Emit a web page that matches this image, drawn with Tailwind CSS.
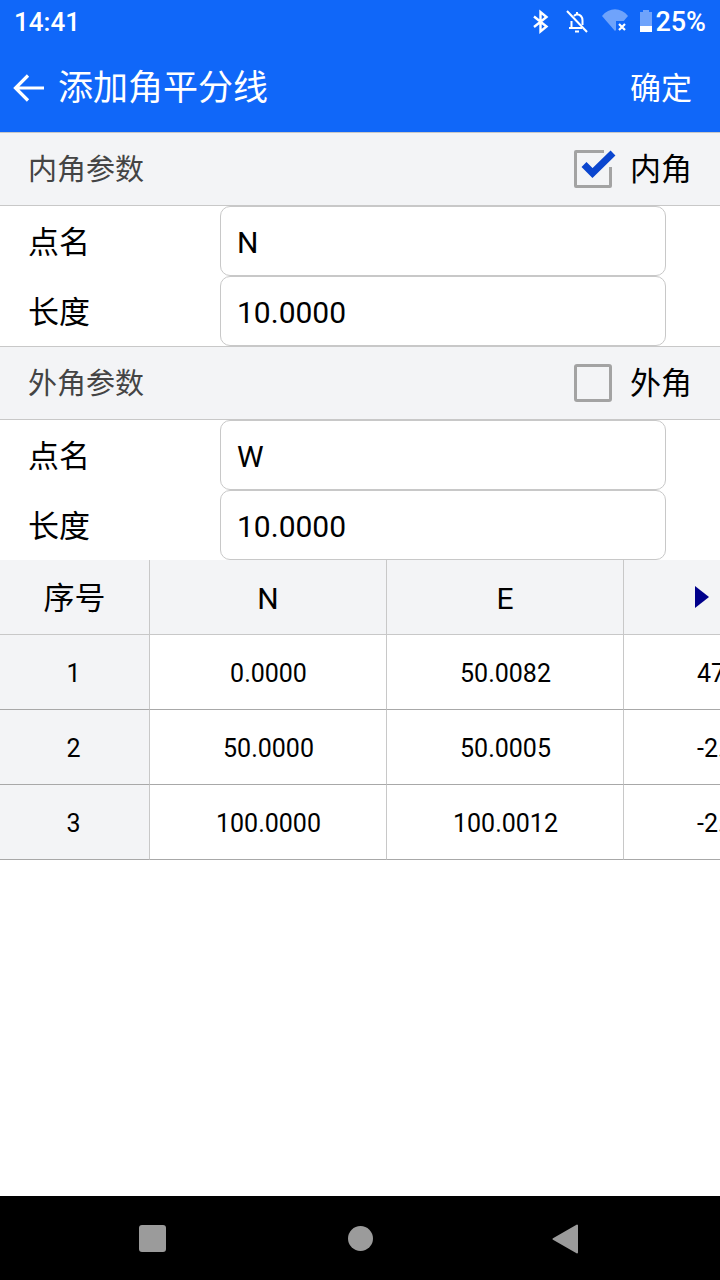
<!DOCTYPE html>
<html lang="zh">
<head>
    <meta charset="UTF-8">
    <meta name="viewport" content="width=device-width, initial-scale=1.0">
    <title>添加角平分线</title>
    <script src="https://cdn.jsdelivr.net/npm/@tailwindcss/browser@4"></script>
</head>
<body class="bg-white">
    <div class="w-[720px] h-[1280px] flex flex-col overflow-hidden font-['Roboto','Noto_Sans_CJK_SC',sans-serif] text-black">
        <!-- Status bar -->
        <div class="h-[44px] bg-[#1067f9] text-white flex items-center pl-[14px] pr-[14px]">
            <span class="text-[26px] font-medium leading-none">14:41</span>
            <div class="ml-auto flex items-center">
                <svg class="w-[20px] h-[26px]" viewBox="0 0 20 26" fill="none" stroke="white" stroke-width="2.4"><path d="M3 7.500L15.500 17.500 9.500 22.500V3L15.500 8 3 18"/></svg>
                <svg class="w-[24px] h-[26px] ml-[15px]" viewBox="0 0 24 26" fill="none" stroke="white" stroke-width="2"><path d="M5.500 18V12M8 7c1-1 2-1.500 3-1.800V3M11 5.200c3.500.5 5.500 3 5.500 6.300V16M3 19h13M9 22.500h4"/><path d="M1 2l20 21"/></svg>
                <svg class="w-[30px] h-[26px] ml-[12px]" viewBox="0 0 30 26"><path d="M0 7C7-2 19-2 26 7L13 22z" fill="white" fill-opacity="0.4"/><path d="M14 12h14v14H14z" fill="#1067f9"/><path d="M17 15l6 6M23 15l-6 6" stroke="white" stroke-width="2.200"/></svg>
                <svg class="w-[14px] h-[26px] ml-[7px]" viewBox="0 0 14 26"><path d="M4 1h6v2h3v20H1V3h3z" fill="white" fill-opacity="0.4"/><path d="M1 17h12v6H1z" fill="white"/></svg>
                <span class="text-[27px] font-medium leading-none ml-[2px]">25%</span>
            </div>
        </div>
        <!-- Toolbar -->
        <div class="h-[88px] bg-[#1067f9] text-white flex items-center">
            <svg class="w-[32px] h-[30px] ml-[13px]" viewBox="0 0 32 30" fill="none" stroke="white" stroke-width="3.200"><path d="M31 15H3M15 2.500L2.500 15 15 27.500"/></svg>
            <span class="text-[35px] leading-none ml-[13px]">添加角平分线</span>
            <span class="text-[31px] leading-none ml-auto mr-[28px]">确定</span>
        </div>
        <!-- Inner angle -->
        <div class="h-[74px] bg-[#f3f4f6] border-y border-[#c8c8c8] flex items-center pl-[28px] pr-[28px] shrink-0">
            <span class="text-[29px] text-[#444444] pt-[4px]">内角参数</span>
            <span class="relative ml-auto w-[38px] h-[38px] border-[3px] border-[#a3a3a3] rounded-[2px]">
                <svg class="absolute -left-[3px] -top-[3px] w-[44px] h-[44px]" viewBox="0 0 44 44" fill="none"><path d="M30 0h8v17h-8z" fill="#f3f4f6"/><path d="M10 14.500l8.500 8.500L39 3" stroke="#0b46cf" stroke-width="7"/></svg>
            </span>
            <span class="text-[31px] ml-[18px] pt-[2px]">内角</span>
        </div>
        <div class="h-[70px] flex items-center pl-[28px]">
            <span class="w-[192px] text-[31px] pt-[4px]">点名</span>
            <div class="w-[446px] h-[70px] border border-[#c8c8c8] rounded-[10px] bg-white flex items-center pl-[16px] pt-[2px] text-[30px]">N</div>
        </div>
        <div class="h-[70px] flex items-center pl-[28px]">
            <span class="w-[192px] text-[31px] pt-[4px]">长度</span>
            <div class="w-[446px] h-[70px] border border-[#c8c8c8] rounded-[10px] bg-white flex items-center pl-[16px] pt-[2px] text-[30px]">10.0000</div>
        </div>
        <!-- Outer angle -->
        <div class="h-[74px] bg-[#f3f4f6] border-y border-[#c8c8c8] flex items-center pl-[28px] pr-[28px] shrink-0">
            <span class="text-[29px] text-[#444444] pt-[4px]">外角参数</span>
            <span class="ml-auto w-[38px] h-[38px] border-[3px] border-[#a3a3a3] rounded-[3px]"></span>
            <span class="text-[31px] ml-[18px] pt-[2px]">外角</span>
        </div>
        <div class="h-[70px] flex items-center pl-[28px]">
            <span class="w-[192px] text-[31px] pt-[4px]">点名</span>
            <div class="w-[446px] h-[70px] border border-[#c8c8c8] rounded-[10px] bg-white flex items-center pl-[16px] pt-[2px] text-[30px]">W</div>
        </div>
        <div class="h-[70px] flex items-center pl-[28px]">
            <span class="w-[192px] text-[31px] pt-[4px]">长度</span>
            <div class="w-[446px] h-[70px] border border-[#c8c8c8] rounded-[10px] bg-white flex items-center pl-[16px] pt-[2px] text-[30px]">10.0000</div>
        </div>
        <!-- Table -->
        <div class="grid grid-cols-[150px_237px_237px_96px] grid-rows-[75px_75px_75px_75px] text-[25px]">
            <div class="bg-[#f3f4f6] border-r border-b border-[#c8c8c8] flex items-center justify-center text-[31px] pt-[4px]">序号</div>
            <div class="bg-[#f3f4f6] border-r border-b border-[#c8c8c8] flex items-center justify-center text-[30px] pt-[2px]">N</div>
            <div class="bg-[#f3f4f6] border-r border-b border-[#c8c8c8] flex items-center justify-center text-[30px] pt-[2px]">E</div>
            <div class="relative bg-[#f3f4f6] border-b border-[#c8c8c8]">
                <svg class="absolute left-[70px] top-[25px] w-[16px] h-[24px]" viewBox="0 0 16 24"><path d="M1 1l14 11L1 23z" fill="#00008b"/></svg>
            </div>

            <div class="bg-[#f3f4f6] border-r border-b border-[#c8c8c8] border-b-[#a8a8a8] flex items-center justify-center pt-[4px] pr-[2px]">1</div>
            <div class="border-r border-b border-[#c8c8c8] border-b-[#a8a8a8] flex items-center justify-center pt-[4px] pl-[1px]">0.0000</div>
            <div class="border-r border-b border-[#c8c8c8] border-b-[#a8a8a8] flex items-center justify-center pt-[4px] pl-[1px]">50.0082</div>
            <div class="border-b border-[#a8a8a8] overflow-hidden flex items-center pl-[73px] pt-[4px]">47.8123</div>

            <div class="bg-[#f3f4f6] border-r border-b border-[#c8c8c8] border-b-[#a8a8a8] flex items-center justify-center pt-[4px] pr-[2px]">2</div>
            <div class="border-r border-b border-[#c8c8c8] border-b-[#a8a8a8] flex items-center justify-center pt-[4px] pl-[1px]">50.0000</div>
            <div class="border-r border-b border-[#c8c8c8] border-b-[#a8a8a8] flex items-center justify-center pt-[4px] pl-[1px]">50.0005</div>
            <div class="border-b border-[#a8a8a8] overflow-hidden flex items-center pl-[73px] pt-[4px]">-2.1877</div>

            <div class="bg-[#f3f4f6] border-r border-b border-[#c8c8c8] border-b-[#a8a8a8] flex items-center justify-center pt-[4px] pr-[2px]">3</div>
            <div class="border-r border-b border-[#c8c8c8] border-b-[#a8a8a8] flex items-center justify-center pt-[4px] pl-[1px]">100.0000</div>
            <div class="border-r border-b border-[#c8c8c8] border-b-[#a8a8a8] flex items-center justify-center pt-[4px] pl-[1px]">100.0012</div>
            <div class="border-b border-[#a8a8a8] overflow-hidden flex items-center pl-[73px] pt-[4px]">-2.1877</div>
        </div>
        <div class="flex-1"></div>
        <!-- Nav bar -->
        <div class="h-[84px] bg-black flex items-center relative shrink-0">
            <span class="absolute left-[139px] top-[29px] w-[27px] h-[27px] rounded-[3px] bg-[#9b9b9b]"></span>
            <span class="absolute left-[348px] top-[30px] w-[25px] h-[25px] rounded-full bg-[#9b9b9b]"></span>
            <svg class="absolute left-[552px] top-[28px] w-[27px] h-[30px]" viewBox="0 0 27 30"><path d="M25 1.500v27L1.500 15z" fill="#9b9b9b" stroke="#9b9b9b" stroke-width="2" stroke-linejoin="round"/></svg>
        </div>
    </div>
</body>
</html>
